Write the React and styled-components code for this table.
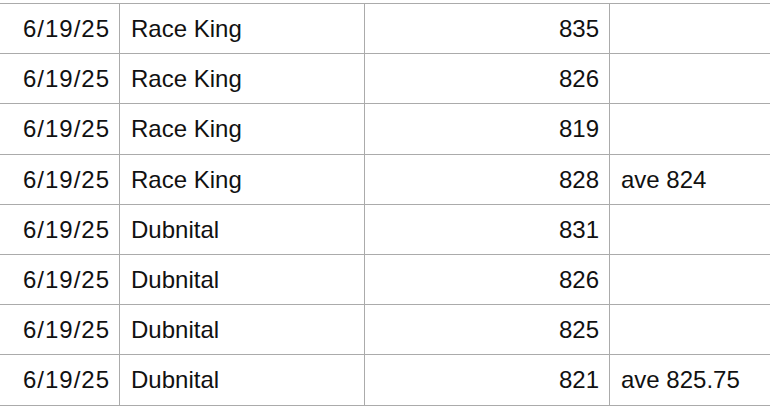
import React from "react";
import styled, { createGlobalStyle } from "styled-components";

const Global = createGlobalStyle`
  html, body { margin: 0; padding: 0; background: #fff; overflow: hidden; }
  body { font-family: "Liberation Sans", Arial, Helvetica, sans-serif; }
`;

const Sheet = styled.div`
  width: 770px;
  height: 408px;
  overflow: hidden;
  padding-top: 3px;
  box-sizing: border-box;
`;

const Grid = styled.div`
  display: grid;
  grid-template-columns: 120px 245px 245px 1fr;
  border-top: 1px solid #ababab;
`;

const Cell = styled.div`
  box-sizing: border-box;
  height: ${(p) => (p.$tall ? 51 : 50)}px;
  border-bottom: 1px solid #ababab;
  border-right: ${(p) => (p.$last ? "none" : "1px solid #ababab")};
  display: flex;
  align-items: center;
  justify-content: ${(p) => (p.$right ? "flex-end" : "flex-start")};
  padding: 0 ${(p) => (p.$date ? 9 : 10)}px 0 11px;
  font-size: 24px;
  letter-spacing: ${(p) => (p.$date ? "1px" : "0")};
  color: #111;
  white-space: nowrap;
  overflow: hidden;
`;

const rows = [
  { d: "6/19/25", n: "Race King", v: "835", note: "" },
  { d: "6/19/25", n: "Race King", v: "826", note: "" },
  { d: "6/19/25", n: "Race King", v: "819", note: "", tall: true },
  { d: "6/19/25", n: "Race King", v: "828", note: "ave 824" },
  { d: "6/19/25", n: "Dubnital", v: "831", note: "" },
  { d: "6/19/25", n: "Dubnital", v: "826", note: "" },
  { d: "6/19/25", n: "Dubnital", v: "825", note: "" },
  { d: "6/19/25", n: "Dubnital", v: "821", note: "ave 825.75", tall: true },
];

export default function App() {
  return (
    <Sheet>
      <Global />
      <Grid>
        {rows.map((r, i) => (
          <React.Fragment key={i}>
            <Cell $right $date $tall={r.tall}>{r.d}</Cell>
            <Cell $tall={r.tall}>{r.n}</Cell>
            <Cell $right $tall={r.tall}>{r.v}</Cell>
            <Cell $last $tall={r.tall}>{r.note}</Cell>
          </React.Fragment>
        ))}
      </Grid>
    </Sheet>
  );
}
